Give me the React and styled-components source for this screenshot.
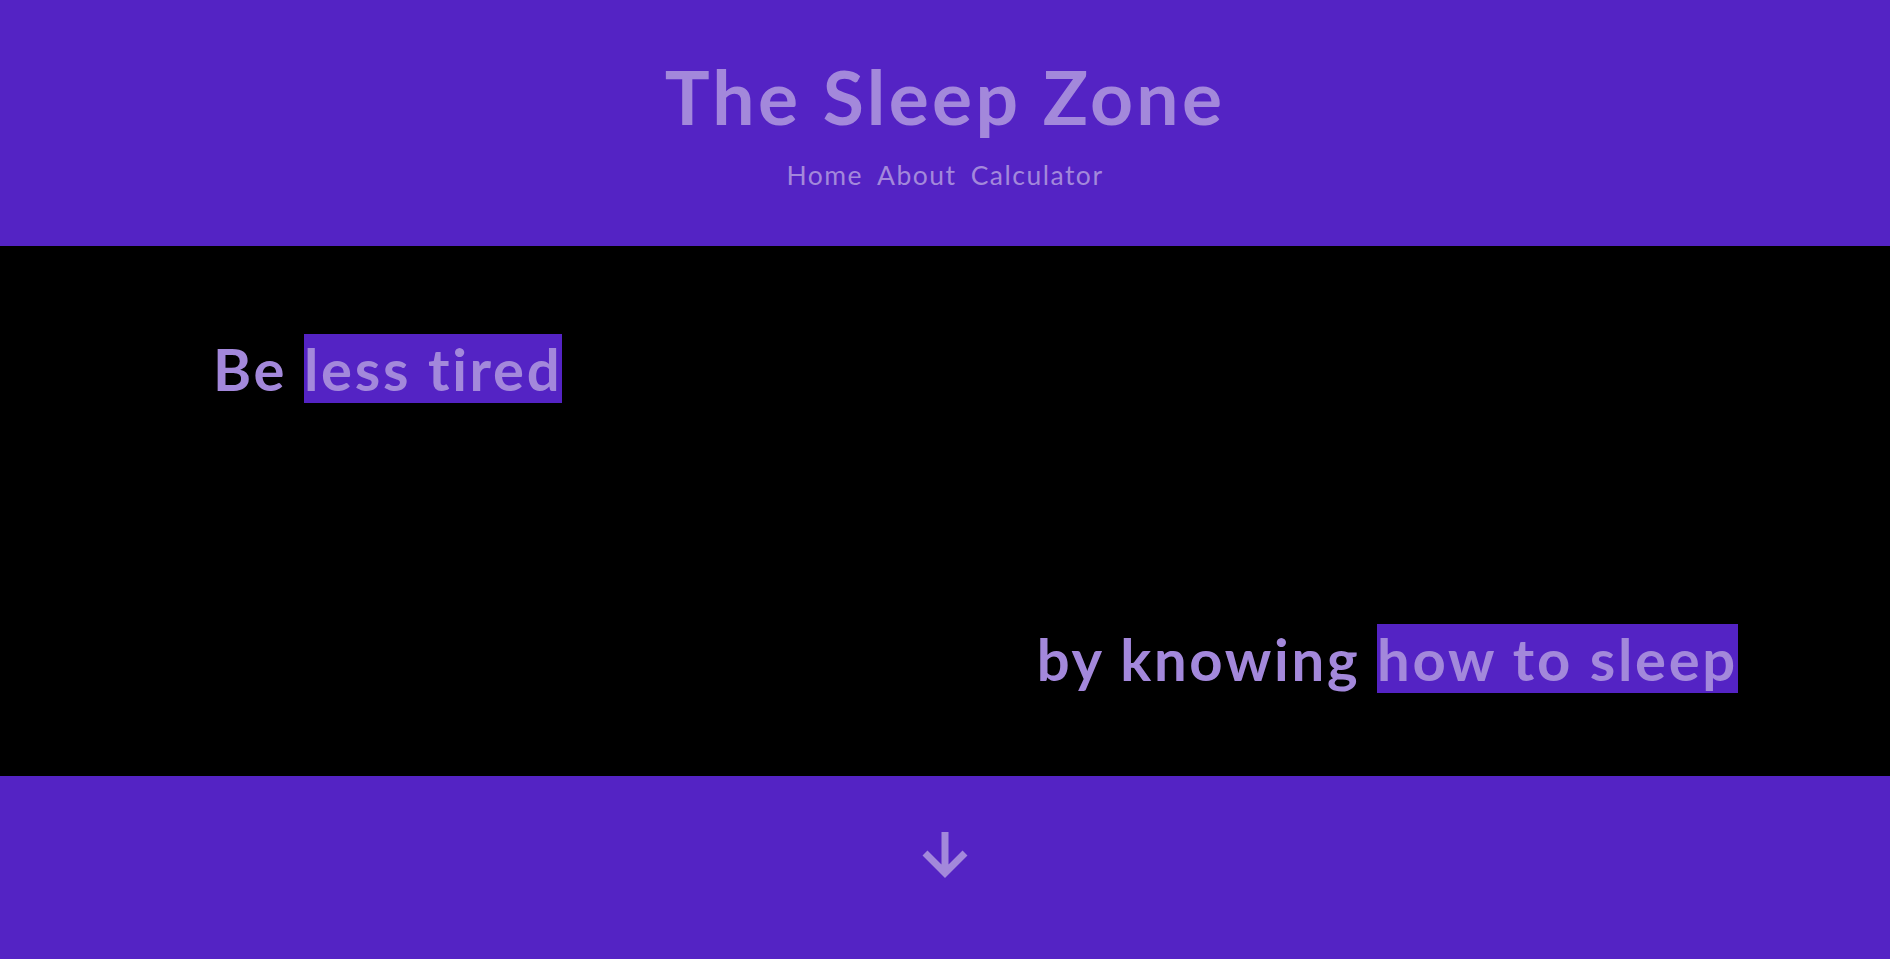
import React from 'react';
import styled, { createGlobalStyle } from 'styled-components';

const Global = createGlobalStyle`
  html, body {
    margin: 0;
    padding: 0;
    background: #5423c4;
    font-family: 'Lato', 'Liberation Sans', sans-serif;
    font-variant-ligatures: none;
  }
`;

const Page = styled.div`
  display: flex;
  flex-direction: column;
  height: 959px;
  color: #a388db;
`;

const Header = styled.header`
  height: 246px;
  background: #5423c4;
  display: flex;
  flex-direction: column;
  align-items: center;
  padding-top: 51px;
  box-sizing: border-box;
`;

const Title = styled.h1`
  margin: 0;
  font-size: 75px;
  font-weight: 700;
  line-height: 90px;
  letter-spacing: 3.3px;
`;

const Nav = styled.nav`
  display: flex;
  gap: 14px;
  margin-top: 18px;
`;

const NavLink = styled.a`
  color: #a388db;
  text-decoration: none;
  font-size: 26.5px;
  font-weight: 400;
  line-height: 32px;
  letter-spacing: 1.5px;
`;

const Hero = styled.section`
  height: 530px;
  background: #000;
  display: flex;
  flex-direction: column;
  justify-content: space-between;
  padding: 88px 152px 83px 213px;
  box-sizing: border-box;
`;

const Line = styled.h2`
  margin: 0;
  font-size: 58px;
  font-weight: 700;
  line-height: 69px;
  letter-spacing: 2.7px;
  align-self: ${({ $end }) => ($end ? 'flex-end' : 'flex-start')};
`;

const Mark = styled.span`
  background: #5423c4;
`;

const Footer = styled.footer`
  flex: 1;
  background: #5423c4;
  display: flex;
  justify-content: center;
  padding-top: 56px;
  box-sizing: border-box;
`;

const Arrow = () => (
  <svg width="48" height="48" viewBox="0 0 48 48">
    <path d="M24 0 V41 M4 21 L24 41 L44 21" fill="none" stroke="#a388db" strokeWidth="7" />
  </svg>
);

export default function App() {
  return (
    <Page>
      <Global />
      <Header>
        <Title>The Sleep Zone</Title>
        <Nav>
          <NavLink href="#">Home</NavLink>
          <NavLink href="#">About</NavLink>
          <NavLink href="#">Calculator</NavLink>
        </Nav>
      </Header>
      <Hero>
        <Line>Be <Mark>less tired</Mark></Line>
        <Line $end>by knowing <Mark>how to sleep</Mark></Line>
      </Hero>
      <Footer>
        <Arrow />
      </Footer>
    </Page>
  );
}
